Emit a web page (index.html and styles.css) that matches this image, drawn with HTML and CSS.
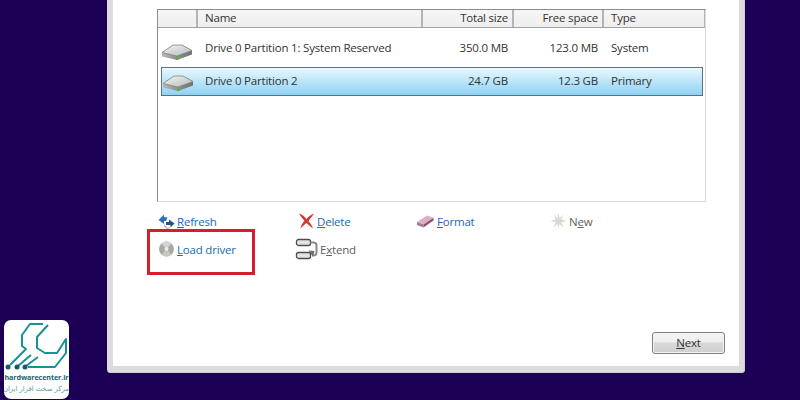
FILE: index.html
```html
<!DOCTYPE html>
<html lang="en">
<head>
<meta charset="utf-8">
<title>Windows Setup</title>
<link rel="stylesheet" href="styles.css">
</head>
<body>
<main class="window">
  <div class="pane">
    <div class="list">
      <div class="row head">
        <span class="c0"></span>
        <span class="c1">Name</span>
        <span class="c2">Total size</span>
        <span class="c3">Free space</span>
        <span class="c4">Type</span>
      </div>
      <div class="row item first">
        <span class="c0"><svg class="disk" viewBox="0 0 32 18"><use href="#disk"/></svg></span>
        <span class="c1">Drive 0 Partition 1: System Reserved</span>
        <span class="c2">350.0 MB</span>
        <span class="c3">123.0 MB</span>
        <span class="c4">System</span>
      </div>
      <div class="row item selected">
        <span class="c0"><svg class="disk" viewBox="0 0 32 18"><use href="#disk"/></svg></span>
        <span class="c1">Drive 0 Partition 2</span>
        <span class="c2">24.7 GB</span>
        <span class="c3">12.3 GB</span>
        <span class="c4">Primary</span>
      </div>
    </div>
    <div class="actions">
      <a class="action">
        <svg class="ico" viewBox="0 0 17 16">
          <path d="M0.500 7 6 1.500v2.700h3.500L8 8H6v3z" fill="#2f6fb8"/>
          <path d="M8 9h3V6.500L16.500 10.500 12.500 14.500V12H8z" fill="#24548c"/>
          <path d="M6 12l3 3.500 3-1" fill="none" stroke="#cbb0cd" stroke-width="1.300"/>
        </svg>
        <span><u>R</u>efresh</span>
      </a>
      <a class="action">
        <svg class="ico" viewBox="0 0 17 16">
          <path d="M1 .5C4.500 1.500 6.500 3.500 8.500 6 10.500 3.500 13 1.500 16 .5 14 3.500 11.800 6 10.500 8.300c1.800 2 3.500 4.200 4.500 7.200C12.300 13.500 10.200 11.500 8.300 10 6.300 11.800 4.300 13.700 2.300 15.500 3 12.500 4.800 9.700 6.500 7.800 4.500 5.500 2.500 3.500 1 .5z" fill="#cf3b32"/>
        </svg>
        <span><u>D</u>elete</span>
      </a>
      <a class="action">
        <svg class="ico wide" viewBox="0 0 19 14">
          <path d="M1 8 11 1.500l6.500 2.300L7.500 10.500z" fill="#dcb0c4"/>
          <path d="M1 8l6.500 2.500v3L1 11z" fill="#a67790"/>
          <path d="M7.500 10.500l10-6.700V6.500l-10 7z" fill="#86566f"/>
        </svg>
        <span><u>F</u>ormat</span>
      </a>
      <a class="action disabled">
        <svg class="ico" viewBox="0 0 18 18">
          <path d="M9 0l1.300 6L14.500 1.500 12 7l6 2-6 1.700 3 5.300-5-3.500L9 18l-1-5.500L3 16l3-5.200L0 9l6-2L3.500 1.500 7.700 6z" fill="#d8d8d4"/>
        </svg>
        <span>N<u>e</u>w</span>
      </a>
      <a class="action">
        <svg class="ico" viewBox="0 0 16 16">
          <circle cx="8" cy="8" r="7.500" fill="#a9a9a4"/>
          <path d="M8 8 3 2.500A7.500 7.500 0 0 1 13 2.400z" fill="#d4d4cf"/>
          <path d="M8 8l-5 5.500A7.500 7.500 0 0 0 13 13.600z" fill="#c7c7c0"/>
          <circle cx="8" cy="8" r="2" fill="#eee"/>
        </svg>
        <span><u>L</u>oad driver</span>
      </a>
      <a class="action disabled extend">
        <svg class="ico tall" viewBox="0 0 23 22">
          <rect x="1.500" y="1.500" width="14" height="6" rx="2" fill="#e4e4e4" stroke="#4d4d4d" stroke-width="1.300"/>
          <rect x="1.500" y="14.500" width="14" height="6" rx="2" fill="#e4e4e4" stroke="#4d4d4d" stroke-width="1.300"/>
          <path d="M15.500 4.500h3q3 0 3 3v7q0 3-3 3h-1" fill="none" stroke="#8a8a8a" stroke-width="2"/>
          <path d="M13.500 12.500l6 .5-1.500 6z" fill="#6e6e6e"/>
        </svg>
        <span>E<u>x</u>tend</span>
      </a>
    </div>
    <div class="footer">
      <button class="next" type="button"><u>N</u>ext</button>
    </div>
  </div>
</main>
<div class="redbox"></div>
<aside class="logo">
  <svg class="logo-mark" viewBox="0 0 65 52">
    <g fill="none" stroke="#18909a" stroke-width="2" stroke-linejoin="round">
      <path d="M39 4H26L18 15V26L22 29 6 45"/>
      <path d="M44 5 33 17V28L41 33H53L62 19V33L51 47H24"/>
      <path d="M14 46 27 35M22 46 34 37"/>
    </g>
    <g fill="#165a64">
      <circle cx="4" cy="47" r="2.500"/><circle cx="13" cy="47" r="2.500"/><circle cx="21" cy="47" r="2.500"/>
    </g>
  </svg>
  <div class="logo-en">hardwarecenter.ir</div>
  <div class="logo-fa" dir="rtl" lang="fa">مرکز سخت افزار ایران</div>
</aside>
<svg class="defs" width="0" height="0">
  <defs>
    <linearGradient id="dt" x1="0" y1="0" x2="1" y2="1"><stop offset="0" stop-color="#f2f4f2"/><stop offset="1" stop-color="#b7bcb9"/></linearGradient>
    <linearGradient id="df" x1="0" y1="0" x2="1" y2="0"><stop offset="0" stop-color="#b5b9b7"/><stop offset=".5" stop-color="#8b908e"/><stop offset="1" stop-color="#6d7272"/></linearGradient>
    <symbol id="disk" viewBox="0 0 32 18">
      <path d="M1 9.500 12 2h9l10 5.500v4L16 17 1 13.500z" fill="url(#df)"/>
      <path d="M1 9.500 12 2h9l10 5.500L16 13z" fill="url(#dt)"/>
      <path d="M1 9.500 12 2h9l10 5.500L16 13z" fill="none" stroke="#7f8583" stroke-width=".8"/>
      <rect x="15" y="13.500" width="2.500" height="3.500" fill="#62ad3e"/>
    </symbol>
  </defs>
</svg>
</body>
</html>
```
FILE: styles.css
```css
* { box-sizing: border-box; }
html, body { margin: 0; height: 400px; overflow: hidden; }
body {
  position: relative;
  background: #1b0056;
  font-family: "Open Sans", "Liberation Sans", sans-serif;
  font-size: 11.5px;
  letter-spacing: -.2px;
  color: #333;
}
.window {
  width: 638px;
  height: 373px;
  margin-left: 107px;
  padding: 0 6px 7px;
  background: #dcdcdc;
  border-radius: 0 0 4px 4px;
  box-shadow: inset -1px -1px 0 #cfcfcf;
}
.pane {
  height: 100%;
  background: #fff;
  padding: 9px 14px 0 44px;
  display: flex;
  flex-direction: column;
}
.list {
  height: 193px;
  margin-right: 19px;
  border-style: solid;
  border-width: 1.500px 1px 1px 1.500px;
  border-color: #8c8c8c #dcdcdc #dcdcdc #8c8c8c;
  flex: none;
}
.row {
  display: grid;
  grid-template-columns: 40px 225px 91px 90px 1fr;
  align-items: center;
}
.row span:not(.c0) { white-space: nowrap; }
.head {
  height: 18px;
  background: linear-gradient(#f6f6f6, #eeeeee);
  border-bottom: 1px solid #a2a2a2;
}
.head span {
  height: 17px;
  line-height: 16px;
  border-right: 2px solid #b4b4b4;
}
.head .c4 { border-right: 1px solid #b4b4b4; }
.head .c2, .head .c3 { text-align: right; padding-right: 4px; }
.c2, .c3 { text-align: right; padding-right: 6px; }
.c1, .c4 { padding-left: 7px; }
.item { margin: 0 2px 0 3px; grid-template-columns: 37px 225px 91px 90px 1fr; }
.item.first { margin-top: 3px; height: 33px; }
.item.selected {
  margin-top: 3px;
  height: 29px;
  padding-bottom: 2px;
  border: 1px solid #5f7180;
  grid-template-columns: 36px 225px 91px 90px 1fr;
  background: linear-gradient(#eaf8fe 0%, #bfe7fa 45%, #8fd2f3 100%);
}
.item .c0 { display: flex; align-items: center; }
.item.first .disk { margin-top: 9px; }
.item.selected .disk { margin-top: 5px; }
.disk { width: 32px; height: 18px; display: block; }
.defs { position: absolute; }
.actions {
  display: grid;
  grid-template-columns: 140px 118px 134px auto;
  grid-auto-rows: 28px;
  justify-content: start;
  margin-top: 5px;
  padding-left: 1px;
}
.action { display: flex; align-items: center; gap: 2px; color: #1a6aae; height: 28px; }
.action .ico { width: 17px; height: 16px; flex: none; }
.action .ico.wide { width: 19px; height: 14px; }
.action .ico.tall { width: 23px; height: 22px; }
.extend { margin-left: -3px; }
.disabled { color: #5e5e5e; }
.footer { margin-top: auto; display: flex; justify-content: flex-end; padding: 0 0 12px; }
.next {
  width: 73px;
  height: 22px;
  padding: 0 0 2px;
  font: inherit;
  letter-spacing: inherit;
  color: #333;
  background: linear-gradient(#f4f4f4, #eeeeee 45%, #d8d8d8 50%, #cfcfcf);
  border: 1px solid #7f7f7f;
  border-radius: 3px;
  box-shadow: inset 0 0 0 1px #f5f5f5;
}
.redbox {
  position: absolute;
  left: 147px; top: 229px;
  width: 108px; height: 46px;
  border: 3px solid #d21f2b;
}
.logo {
  position: absolute;
  left: 4px; top: 320px;
  width: 65px; height: 79px;
  background: #fff;
  border-radius: 7px;
  text-align: center;
  overflow: hidden;
  letter-spacing: 0;
}
.logo-mark { display: block; width: 65px; height: 52px; }
.logo-en { font: 700 7.200px/11px "Open Sans", sans-serif; color: #15656e; white-space: nowrap; letter-spacing: -.1px; }
.logo-fa { font: 6.800px/12px "DejaVu Sans", sans-serif; color: #4ea0a6; white-space: nowrap; }
```
